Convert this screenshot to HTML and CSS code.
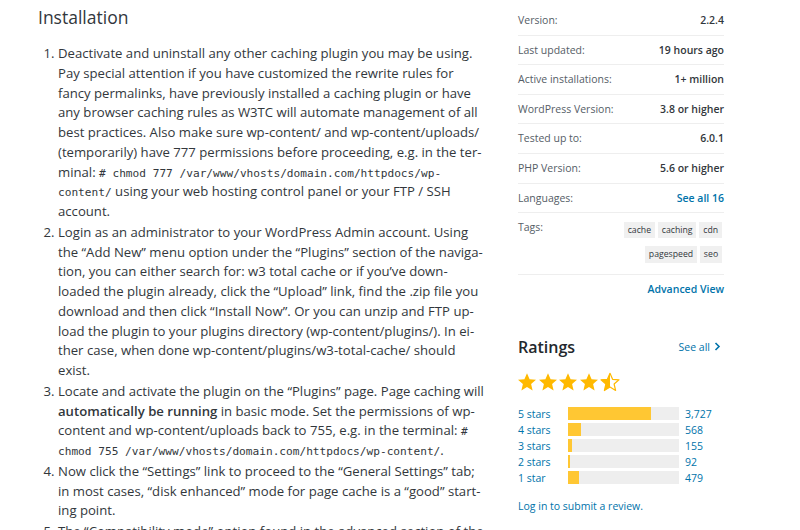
FILE: index.html
```html
<!DOCTYPE html>
<html lang="en">
<head>
    <meta charset="utf-8">
    <title>W3 Total Cache – Installation</title>
    <link rel="stylesheet" href="styles.css">
</head>
<body>

<div class="page">

    <main class="content">
        <h2 class="section-title">Installation</h2>
        <ol class="steps">
            <li>Deactivate and uninstall any other caching plugin you may be using. Pay special attention if you have customized the rewrite rules for fancy permalinks, have previously installed a caching plugin or have any browser caching rules as W3TC will automate management of all best practices. Also make sure wp-content/ and wp-content/uploads/ (temporarily) have 777 permissions before proceeding, e.g. in the ter&shy;minal: <code># chmod 777 /var/www/vhosts/domain.com/httpdocs/wp-content/</code> using your web hosting control panel or your FTP / SSH account.</li>
            <li>Login as an administrator to your WordPress Admin account. Using the “Add New” menu option under the “Plugins” section of the naviga&shy;tion, you can either search for: w3 total cache or if you’ve down&shy;loaded the plugin already, click the “Upload” link, find the .zip file you download and then click “Install Now”. Or you can unzip and FTP up&shy;load the plugin to your plugins directory (wp-content/plugins/). In ei&shy;ther case, when done wp-content/plugins/w3-total-cache/ should exist.</li>
            <li>Locate and activate the plugin on the “Plugins” page. Page caching will <strong>automatically be running</strong> in basic mode. Set the permissions of wp-content and wp-content/uploads back to 755, e.g. in the terminal: <code># chmod 755 /var/www/vhosts/domain.com/httpdocs/wp-content/</code>.</li>
            <li>Now click the “Settings” link to proceed to the “General Settings” tab; in most cases, “disk enhanced” mode for page cache is a “good” start&shy;ing point.</li>
            <li>The “Compatibility mode” option found in the advanced section of the “Page Cache Settings” tab will enable functionality that optimizes the interoperablity of caching with WordPress, is disabled by default, but highly recommended.</li>
        </ol>
    </main>

    <aside class="sidebar">
        <ul class="meta">
            <li><span>Version:</span><strong>2.2.4</strong></li>
            <li><span>Last updated:</span><strong>19 hours ago</strong></li>
            <li><span>Active installations:</span><strong>1+ million</strong></li>
            <li><span>WordPress Version:</span><strong>3.8 or higher</strong></li>
            <li><span>Tested up to:</span><strong>6.0.1</strong></li>
            <li><span>PHP Version:</span><strong>5.6 or higher</strong></li>
            <li><span>Languages:</span><a href="#" class="strong-link">See all 16</a></li>
            <li class="meta-tags">
                <span>Tags:</span>
                <div class="tags">
                    <a href="#">cache</a>
                    <a href="#">caching</a>
                    <a href="#">cdn</a>
                    <a href="#">pagespeed</a>
                    <a href="#">seo</a>
                </div>
            </li>
        </ul>

        <div class="advanced"><a href="#" class="strong-link">Advanced View</a></div>

        <section class="ratings">
            <div class="ratings-head">
                <h3>Ratings</h3>
                <a href="#" class="see-all">See all
                    <svg width="7" height="9" viewBox="0 0 7 9"><polyline points="1.5,1 5,4.5 1.5,8" fill="none" stroke="currentColor" stroke-width="1.6"/></svg>
                </a>
            </div>

            <div class="stars" title="4.5 out of 5 stars">
                <svg viewBox="0 0 20 20"><polygon class="star-fill" points="10,1.3 12.6,7.3 19,7.8 14.1,12 15.6,18.5 10,15.1 4.4,18.5 5.9,12 1,7.8 7.4,7.3"/></svg>
                <svg viewBox="0 0 20 20"><polygon class="star-fill" points="10,1.3 12.6,7.3 19,7.8 14.1,12 15.6,18.5 10,15.1 4.4,18.5 5.9,12 1,7.8 7.4,7.3"/></svg>
                <svg viewBox="0 0 20 20"><polygon class="star-fill" points="10,1.3 12.6,7.3 19,7.8 14.1,12 15.6,18.5 10,15.1 4.4,18.5 5.9,12 1,7.8 7.4,7.3"/></svg>
                <svg viewBox="0 0 20 20"><polygon class="star-fill" points="10,1.3 12.6,7.3 19,7.8 14.1,12 15.6,18.5 10,15.1 4.4,18.5 5.9,12 1,7.8 7.4,7.3"/></svg>
                <svg viewBox="0 0 20 20">
                    <defs><clipPath id="half"><rect x="0" y="0" width="10" height="20"/></clipPath></defs>
                    <polygon class="star-line" points="10,1.3 12.6,7.3 19,7.8 14.1,12 15.6,18.5 10,15.1 4.4,18.5 5.9,12 1,7.8 7.4,7.3"/>
                    <polygon class="star-fill" clip-path="url(#half)" points="10,1.3 12.6,7.3 19,7.8 14.1,12 15.6,18.5 10,15.1 4.4,18.5 5.9,12 1,7.8 7.4,7.3"/>
                </svg>
            </div>

            <ul class="rating-bars">
                <li><a href="#">5 stars</a><span class="bar"><span class="fill" style="width: 75%"></span></span><a href="#" class="count">3,727</a></li>
                <li><a href="#">4 stars</a><span class="bar"><span class="fill" style="width: 12%"></span></span><a href="#" class="count">568</a></li>
                <li><a href="#">3 stars</a><span class="bar"><span class="fill" style="width: 4%"></span></span><a href="#" class="count">155</a></li>
                <li><a href="#">2 stars</a><span class="bar"><span class="fill" style="width: 2%"></span></span><a href="#" class="count">92</a></li>
                <li><a href="#">1 star</a><span class="bar"><span class="fill" style="width: 10%"></span></span><a href="#" class="count">479</a></li>
            </ul>

            <p class="review-link"><a href="#">Log in to submit a review.</a></p>
        </section>
    </aside>

</div>

</body>
</html>
```

FILE: styles.css
```css
body {
  margin: 0;
  padding: 0;
  background-color: #fff;
  color: #32373c;
  font-family: "Open Sans", sans-serif;
}

a {
  color: #0073aa;
  text-decoration: none;
}

.page {
  display: flex;
  padding-left: 38px;
}

.content {
  width: 446px;
}

.section-title {
  font-size: 17.5px;
  font-weight: 400;
  line-height: 23px;
  margin: 6px 0 15px;
}

.steps {
  margin: 0;
  padding-left: 20px;
  font-size: 13.15px;
  line-height: 19.75px;
  hyphens: manual;
}

.steps li {
  margin-bottom: 1px;
}

.steps strong {
  font-weight: 600;
}

code {
  font-family: "DejaVu Sans Mono", monospace;
  font-size: 11.15px;
  line-height: 1;
}

/* sidebar */

.sidebar {
  width: 206px;
  margin-left: 34px;
  padding-top: 6px;
  font-size: 10.5px;
}

.meta {
  list-style: none;
  margin: 0;
  padding: 0;
}

.meta li {
  display: flex;
  justify-content: space-between;
  padding: 7px 0;
  line-height: 14.6px;
  border-bottom: 1px solid #eee;
}

.meta span {
  color: #555d66;
}

.meta strong,
.strong-link {
  font-weight: 600;
}

.meta-tags {
  align-items: flex-start;
}

.tags {
  width: 102px;
  margin: 2px 2px 4px 0;
  display: flex;
  flex-wrap: wrap;
  justify-content: flex-end;
  gap: 8px 3px;
}

.tags a {
  background-color: #f0f0f0;
  color: #32373c;
  font-size: 8.7px;
  line-height: 16.3px;
  padding: 0 3.9px;
}

.advanced {
  text-align: right;
  margin-top: 7px;
  line-height: 15px;
}

.ratings {
  margin-top: 39px;
}

.ratings-head {
  display: flex;
  justify-content: space-between;
  align-items: center;
}

.ratings-head h3 {
  margin: 0;
  font-size: 16px;
  font-weight: 600;
  line-height: 22px;
  color: #23282d;
}

.see-all {
  display: flex;
  align-items: center;
  gap: 4px;
  margin-right: 3px;
}

.stars {
  display: flex;
  gap: 0.7px;
  margin: 14px 0 0 -1px;
}

.stars svg {
  width: 20px;
  height: 20px;
}

.star-fill {
  fill: #ffb900;
}

.star-line {
  fill: none;
  stroke: #ffb900;
  stroke-width: 1.2;
  stroke-linejoin: round;
}

.rating-bars {
  list-style: none;
  margin: 14px 0 0;
  padding: 0;
}

.rating-bars li {
  display: flex;
  align-items: center;
  height: 16px;
}

.rating-bars li > a:first-child {
  width: 50px;
}

.bar {
  width: 111px;
  height: 13px;
  background-color: #eee;
  background-image: radial-gradient(#e4e4e4 0.6px, transparent 0.7px);
  background-size: 2px 2px;
}

.fill {
  display: block;
  height: 100%;
  background-color: #ffc733;
}

.count {
  margin-left: 6px;
}

.review-link {
  margin: 13px 0 0;
}
```
